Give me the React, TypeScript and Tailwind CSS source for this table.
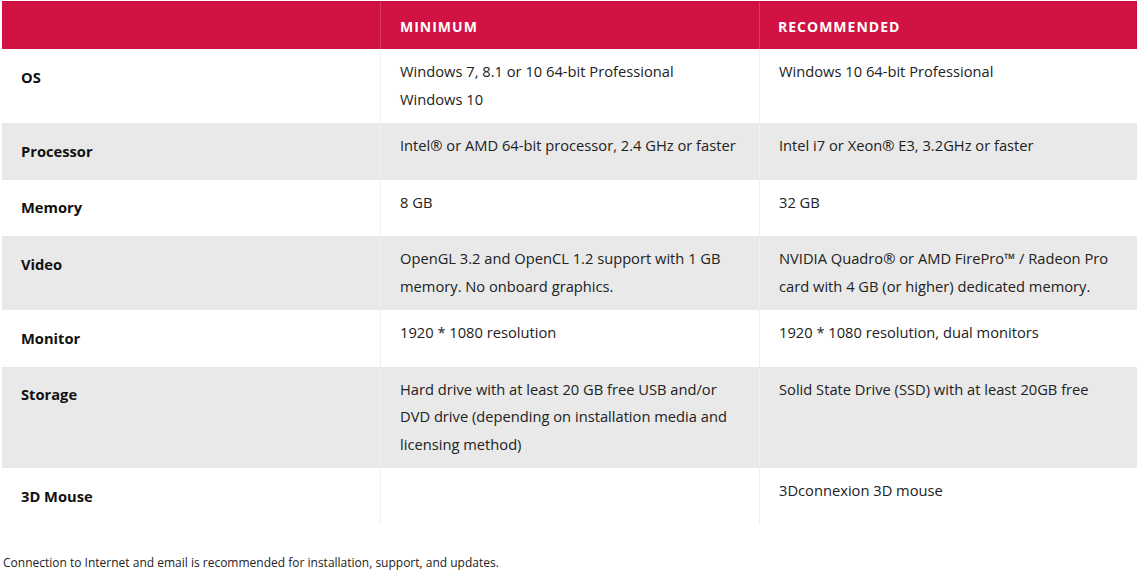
const rows: { label: string; min: string[]; rec: string[] }[] = [
  {
    label: "OS",
    min: ["Windows 7, 8.1 or 10 64-bit Professional", "Windows 10"],
    rec: ["Windows 10 64-bit Professional"],
  },
  {
    label: "Processor",
    min: ["Intel® or AMD 64-bit processor, 2.4 GHz or faster"],
    rec: ["Intel i7 or Xeon® E3, 3.2GHz or faster"],
  },
  { label: "Memory", min: ["8 GB"], rec: ["32 GB"] },
  {
    label: "Video",
    min: ["OpenGL 3.2 and OpenCL 1.2 support with 1 GB memory. No onboard graphics."],
    rec: ["NVIDIA Quadro® or AMD FirePro™ / Radeon Pro card with 4 GB (or higher) dedicated memory."],
  },
  {
    label: "Monitor",
    min: ["1920 * 1080 resolution"],
    rec: ["1920 * 1080 resolution, dual monitors"],
  },
  {
    label: "Storage",
    min: ["Hard drive with at least 20 GB free USB and/or DVD drive (depending on installation media and licensing method)"],
    rec: ["Solid State Drive (SSD) with at least 20GB free"],
  },
  { label: "3D Mouse", min: [], rec: ["3Dconnexion 3D mouse"] },
];

function DataCell({ lines, shaded }: { lines: string[]; shaded: boolean }) {
  return (
    <div
      className={`border-l border-[#f0f0f0] pl-[19px] pr-[22px] pt-[9px] pb-[10px] text-[14.7px] leading-[27.5px] text-[#222] ${
        shaded ? "bg-[#e9e9e9]" : "bg-white"
      }`}
    >
      {lines.map((l) => (
        <div key={l}>{l}</div>
      ))}
    </div>
  );
}

export default function App() {
  return (
    <div className="min-h-[570px] bg-white pt-px" style={{ fontFamily: "'Open Sans', sans-serif" }}>
      {/* Spec table */}
      <div className="ml-[2px] w-[1135px]">
        <div className="grid grid-cols-[378px_379px_378px] border-t border-r border-[#c40e3c] bg-[#d11242] text-[14px] font-bold uppercase tracking-[1px] text-white">
          <div className="h-[47px]" />
          <div className="flex h-[47px] items-center border-l border-[#d83a62] px-[19px] pt-px">Minimum</div>
          <div className="flex h-[47px] items-center border-l border-[#d83a62] px-[18px] pt-px">Recommended</div>
        </div>

        {rows.map((r, i) => {
          const shaded = i % 2 === 1;
          return (
            <div key={r.label} className="grid grid-cols-[378px_379px_378px]">
              <div
                className={`px-[19px] py-[14.5px] text-[14.7px] font-bold leading-[27.5px] text-[#111] ${
                  shaded ? "bg-[#e9e9e9]" : "bg-white"
                }`}
              >
                {r.label}
              </div>
              <DataCell lines={r.min} shaded={shaded} />
              <DataCell lines={r.rec} shaded={shaded} />
            </div>
          );
        })}
      </div>

      <p className="mt-[29px] pl-[3px] text-[12px] leading-[18px] text-[#222]">
        Connection to Internet and email is recommended for installation, support, and updates.
      </p>
    </div>
  );
}
